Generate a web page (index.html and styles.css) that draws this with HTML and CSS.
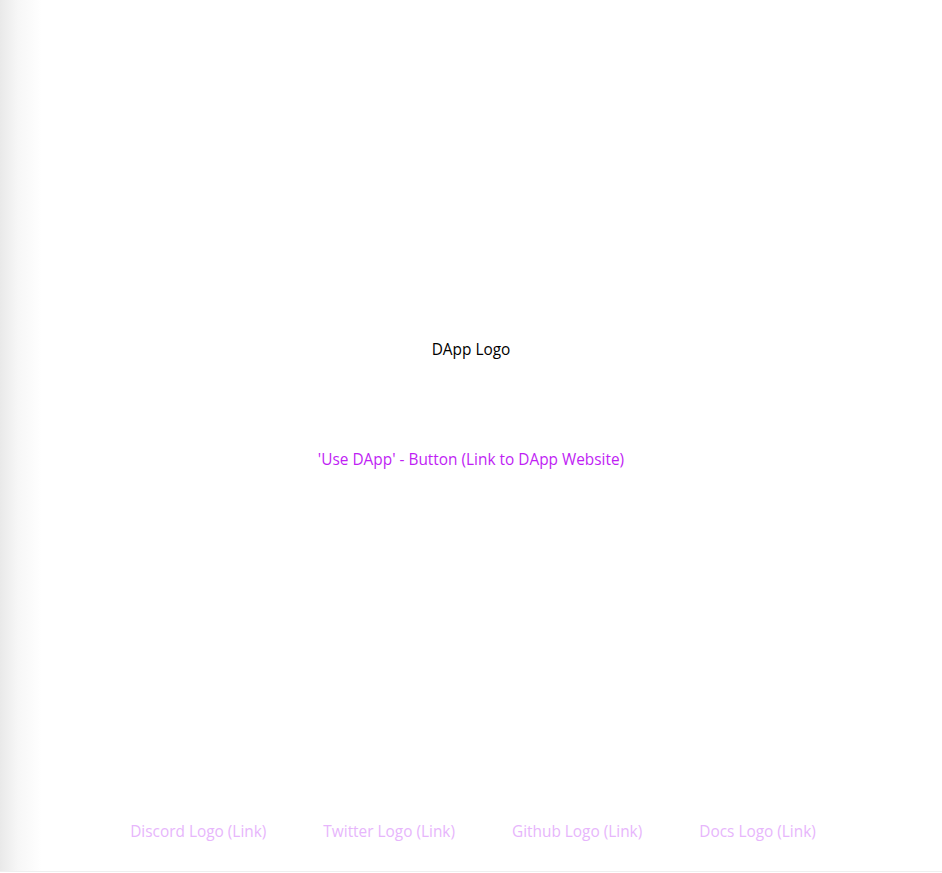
FILE: index.html
```html
<!DOCTYPE html>
<html>
<head>
<meta charset="utf-8">
<link rel="stylesheet" href="styles.css">
</head>
<body>
<div class="page">
  <main class="hero">
    <div class="logo">DApp Logo</div>
    <a class="use-btn" href="#">'Use DApp' - Button (Link to DApp Website)</a>
  </main>
  <footer class="footer">
    <a href="#">Discord Logo (Link)</a>
    <a href="#">Twitter Logo (Link)</a>
    <a href="#">Github Logo (Link)</a>
    <a href="#">Docs Logo (Link)</a>
  </footer>
</div>
</body>
</html>
```
FILE: styles.css
```css
html, body {
  margin: 0;
  padding: 0;
  height: 100%;
  background: #fff;
}
body {
  font-family: "Open Sans", "Noto Sans", sans-serif;
  font-size: 15.4px;
}
.page {
  height: 871px;
  border-bottom: 1px solid #efefef;
  display: flex;
  flex-direction: column;
  background: linear-gradient(to right, #e9e9e9 0px, #f7f7f7 18px, #ffffff 42px);
}
.hero {
  flex: 1;
  display: flex;
  flex-direction: column;
  align-items: center;
  padding-top: 339px;
}
.logo {
  color: #000;
  line-height: 22px;
}
.use-btn {
  margin-top: 88px;
  color: #c01ef4;
  text-decoration: none;
  line-height: 22px;
}
.footer {
  display: flex;
  justify-content: center;
  gap: 57px;
  padding: 0 0 28px 4px;
}
.footer a {
  color: #e7b6fc;
  text-decoration: none;
  line-height: 22px;
}
```
